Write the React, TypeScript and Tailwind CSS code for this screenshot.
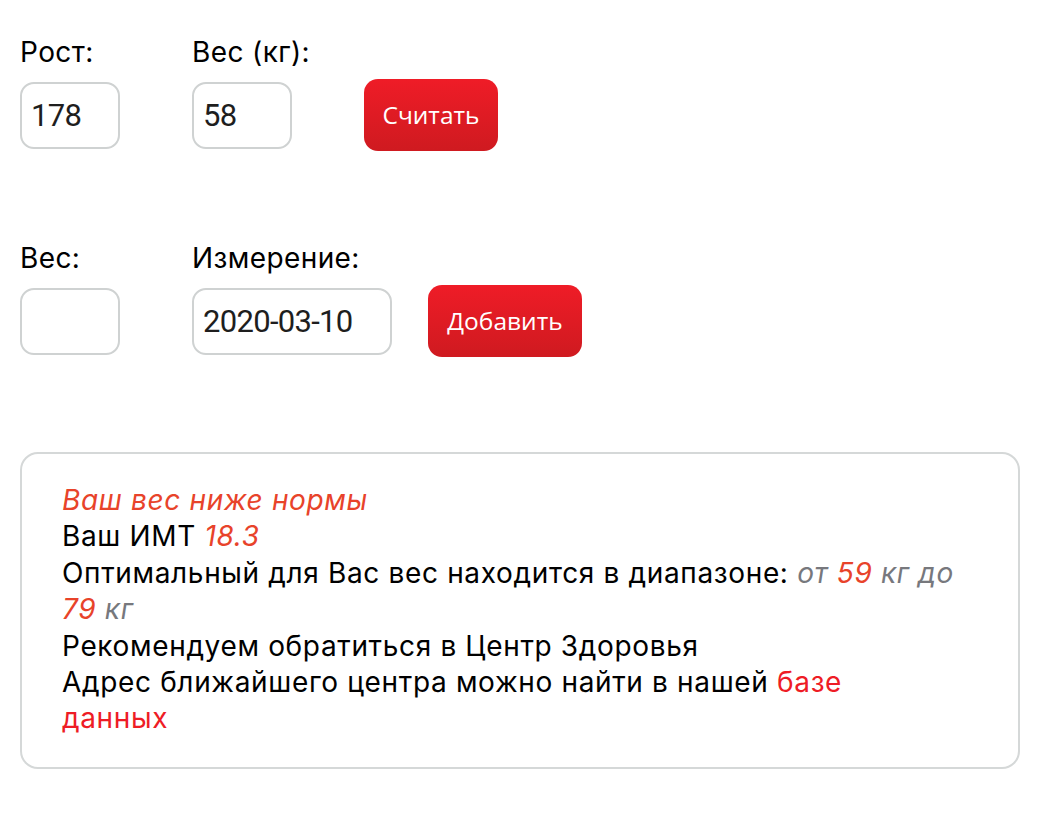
import React from "react";

const body = { fontFamily: "Inter, 'Noto Sans', sans-serif" } as React.CSSProperties;
const inputFont = { fontFamily: "Roboto, 'Noto Sans', sans-serif" } as React.CSSProperties;
const btnFont = { fontFamily: "'Open Sans', sans-serif" } as React.CSSProperties;

function Field({ label, value, width, mr }: { label: string; value: string; width: string; mr: string }) {
  return (
    <div className={`flex flex-col ${width} ${mr}`}>
      <label className="text-[28px] leading-[30px] tracking-[0.4px] text-black mb-[15px] whitespace-nowrap">{label}</label>
      <input
        readOnly
        value={value}
        className={`${width} h-[67px] rounded-[14px] border-2 border-[#cfd2d2] px-[9px] text-[31px] tracking-[-0.7px] text-[#1e1e1e] outline-none`}
        style={inputFont}
      />
    </div>
  );
}

function RedButton({ children, width }: { children: React.ReactNode; width: string }) {
  return (
    <button
      className={`mb-[-2px] h-[72px] ${width} shrink-0 rounded-[14px] bg-gradient-to-b from-[#ef1c27] to-[#cf1a20] text-white text-[24.5px]`}
      style={btnFont}
    >
      {children}
    </button>
  );
}

export default function App() {
  return (
    <div className="bg-white w-[1040px] h-[820px] px-[20px] pt-[37px]" style={body}>
      <div className="flex items-end">
        <Field label="Рост:" value="178" width="w-[100px]" mr="mr-[72px]" />
        <Field label="Вес (кг):" value="58" width="w-[100px]" mr="mr-[72px]" />
        <RedButton width="w-[134px]">Считать</RedButton>
      </div>
      <div className="flex items-end mt-[94px]">
        <Field label="Вес:" value="" width="w-[100px]" mr="mr-[72px]" />
        <Field label="Измерение:" value="2020-03-10" width="w-[200px]" mr="mr-[36px]" />
        <RedButton width="w-[154px]">Добавить</RedButton>
      </div>
      <div className="mt-[97px] w-[1000px] rounded-[18px] border-2 border-[#d5d8d8] pl-[40px] pt-[28px] pb-[30px] text-[28px] leading-[36.4px] tracking-[0.65px] text-black whitespace-nowrap">
        <div className="italic text-[#e8432a]">Ваш вес ниже нормы</div>
        <div>
          Ваш ИМТ <span className="italic text-[#e8432a]">18.3</span>
        </div>
        <div>
          Оптимальный для Вас вес находится в диапазоне:{" "}
          <span className="italic text-[#77787d]">от </span>
          <span className="italic text-[#e8432a]">59</span>
          <span className="italic text-[#77787d]"> кг до</span>
        </div>
        <div>
          <span className="italic text-[#e8432a]">79</span>
          <span className="italic text-[#77787d]"> кг</span>
        </div>
        <div>Рекомендуем обратиться в Центр Здоровья</div>
        <div>
          Адрес ближайшего центра можно найти в нашей <span className="text-[#ee1c25]">базе</span>
        </div>
        <div>
          <span className="text-[#ee1c25]">данных</span>
        </div>
      </div>
    </div>
  );
}
